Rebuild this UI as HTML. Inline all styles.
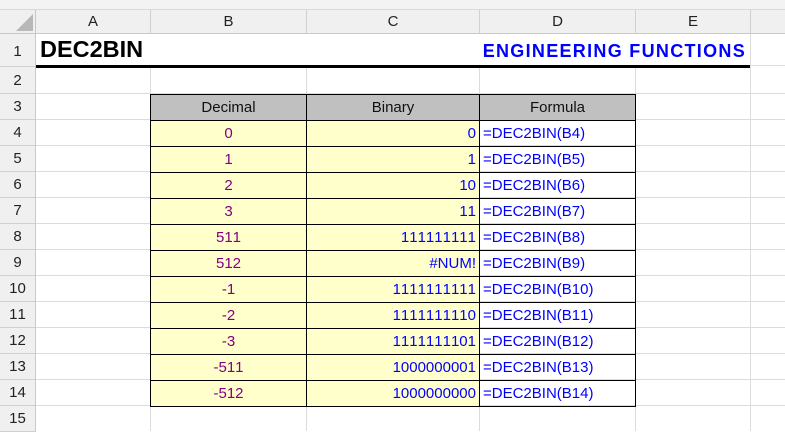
<!DOCTYPE html><html><head><style>
body{margin:0;width:785px;height:431px;overflow:hidden;background:#fff;font-family:"Liberation Sans",Arial,sans-serif;position:relative;font-kerning:none;font-variant-numeric:tabular-nums}
div{position:absolute;box-sizing:border-box}
.ch{top:10px;height:24px;background:#f0f0f0;border-right:1px solid #d0d0d0;border-bottom:1px solid #c8c8c8;text-align:center;font-size:15px;line-height:24px;color:#222}
.rh{left:0;width:36px;background:#f0f0f0;border-right:1px solid #c8c8c8;border-bottom:1px solid #d0d0d0;text-align:center;font-size:15px;color:#222}
.vl{top:34px;bottom:0;width:1px;background:#dcdcdc}
.hl{left:36px;right:0;height:1px;background:#dcdcdc}
.c{font-size:15px;line-height:26px;height:26px;border-right:1px solid #000;border-bottom:1px solid #000;padding:0 3px;white-space:nowrap}
.b{left:150px;width:157px;background:#ffffcc;text-align:center;color:#800080;border-left:1px solid #000}
.cc{left:307px;width:173px;background:#ffffcc;text-align:right;color:#0000ff}
.d{left:480px;width:156px;color:#0000ff}
</style></head><body>
<div style="left:0;top:0;width:785px;height:10px;background:#f3f3f3;border-bottom:1px solid #d8d8d8"></div>
<div style="left:0;top:10px;width:36px;height:24px;background:#f0f0f0;border-right:1px solid #c8c8c8;border-bottom:1px solid #c8c8c8"></div>
<div style="left:16px;top:14px;width:0;height:0;border-left:17px solid transparent;border-bottom:17px solid #b8b8b8"></div>
<div class="ch" style="left:36px;width:115px">A</div>
<div class="ch" style="left:151px;width:156px">B</div>
<div class="ch" style="left:307px;width:173px">C</div>
<div class="ch" style="left:480px;width:156px">D</div>
<div class="ch" style="left:636px;width:115px">E</div>
<div class="ch" style="left:751px;width:40px"></div>
<div class="vl" style="left:150px"></div><div class="vl" style="left:306px"></div><div class="vl" style="left:479px"></div><div class="vl" style="left:635px"></div><div class="vl" style="left:750px"></div>
<div class="rh" style="top:34px;height:33px;line-height:36px">1</div>
<div class="rh" style="top:67px;height:27px;line-height:28px">2</div>
<div class="hl" style="top:93px"></div>
<div class="rh" style="top:94px;height:26px;line-height:26px">3</div>
<div class="hl" style="top:119px"></div>
<div class="rh" style="top:120px;height:26px;line-height:26px">4</div>
<div class="rh" style="top:146px;height:26px;line-height:26px">5</div>
<div class="rh" style="top:172px;height:26px;line-height:26px">6</div>
<div class="rh" style="top:198px;height:26px;line-height:26px">7</div>
<div class="rh" style="top:224px;height:26px;line-height:26px">8</div>
<div class="rh" style="top:250px;height:26px;line-height:26px">9</div>
<div class="rh" style="top:276px;height:26px;line-height:26px">10</div>
<div class="rh" style="top:302px;height:26px;line-height:26px">11</div>
<div class="rh" style="top:328px;height:26px;line-height:26px">12</div>
<div class="rh" style="top:354px;height:26px;line-height:26px">13</div>
<div class="rh" style="top:380px;height:26px;line-height:26px">14</div>
<div class="rh" style="top:406px;height:26px;line-height:26px">15</div>
<div class="hl" style="top:145px;"></div><div class="hl" style="top:171px"></div><div class="hl" style="top:197px"></div><div class="hl" style="top:223px"></div><div class="hl" style="top:249px"></div><div class="hl" style="top:275px"></div><div class="hl" style="top:301px"></div><div class="hl" style="top:327px"></div><div class="hl" style="top:353px"></div><div class="hl" style="top:379px"></div><div class="hl" style="top:405px"></div>
<div style="left:36px;top:34px;width:749px;height:32px;background:#fff;border-bottom:1px solid #dcdcdc"></div>
<div style="left:750px;top:34px;width:1px;height:33px;background:#dcdcdc"></div>
<div style="left:40px;top:36px;font-size:23.5px;font-weight:bold;color:#000">DEC2BIN</div>
<div style="left:380px;top:41px;width:366px;text-align:right;font-size:18px;letter-spacing:1.3px;font-weight:bold;color:#0000ff">ENGINEERING FUNCTIONS</div>
<div style="left:36px;top:65px;width:714px;height:3px;background:#000"></div>
<div class="c b" style="top:94px;height:27px;border-top:1px solid #000;background:#c0c0c0;color:#111">Decimal</div>
<div class="c" style="left:307px;width:173px;top:94px;height:27px;border-top:1px solid #000;background:#c0c0c0;color:#111;text-align:center">Binary</div>
<div class="c" style="left:480px;width:156px;top:94px;height:27px;border-top:1px solid #000;background:#c0c0c0;color:#111;text-align:center">Formula</div>
<div class="c b" style="top:121px">0</div><div class="c cc" style="top:121px">0</div><div class="c d" style="top:121px">=DEC2BIN(B4)</div>
<div class="c b" style="top:147px">1</div><div class="c cc" style="top:147px">1</div><div class="c d" style="top:147px">=DEC2BIN(B5)</div>
<div class="c b" style="top:173px">2</div><div class="c cc" style="top:173px">10</div><div class="c d" style="top:173px">=DEC2BIN(B6)</div>
<div class="c b" style="top:199px">3</div><div class="c cc" style="top:199px">11</div><div class="c d" style="top:199px">=DEC2BIN(B7)</div>
<div class="c b" style="top:225px">511</div><div class="c cc" style="top:225px">111111111</div><div class="c d" style="top:225px">=DEC2BIN(B8)</div>
<div class="c b" style="top:251px">512</div><div class="c cc" style="top:251px">#NUM!</div><div class="c d" style="top:251px">=DEC2BIN(B9)</div>
<div class="c b" style="top:277px">-1</div><div class="c cc" style="top:277px">1111111111</div><div class="c d" style="top:277px">=DEC2BIN(B10)</div>
<div class="c b" style="top:303px">-2</div><div class="c cc" style="top:303px">1111111110</div><div class="c d" style="top:303px">=DEC2BIN(B11)</div>
<div class="c b" style="top:329px">-3</div><div class="c cc" style="top:329px">1111111101</div><div class="c d" style="top:329px">=DEC2BIN(B12)</div>
<div class="c b" style="top:355px">-511</div><div class="c cc" style="top:355px">1000000001</div><div class="c d" style="top:355px">=DEC2BIN(B13)</div>
<div class="c b" style="top:381px">-512</div><div class="c cc" style="top:381px">1000000000</div><div class="c d" style="top:381px">=DEC2BIN(B14)</div>
</body></html>
